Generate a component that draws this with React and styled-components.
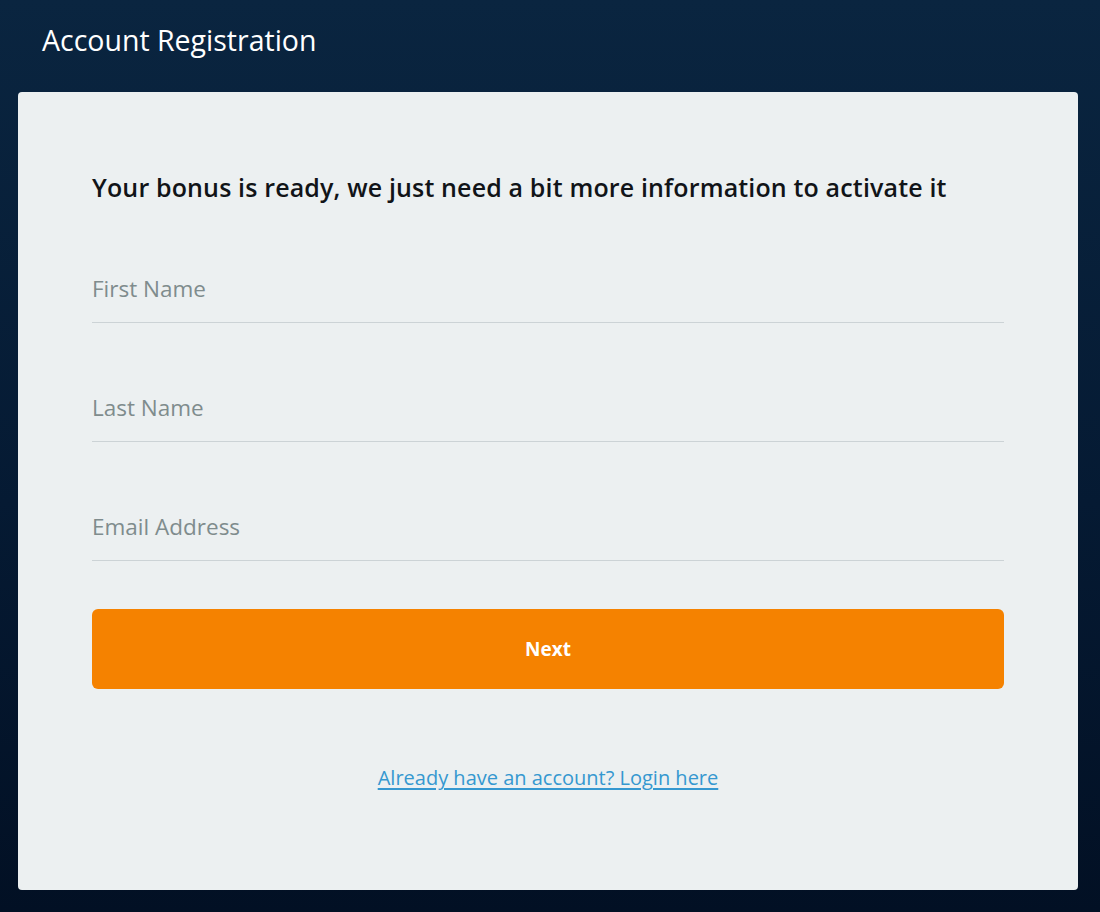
import React from 'react';
import styled, { createGlobalStyle } from 'styled-components';

const GlobalStyle = createGlobalStyle`
  html, body {
    margin: 0;
    padding: 0;
  }
  body {
    min-height: 912px;
    background: linear-gradient(180deg, #0a2540 0%, #051a33 55%, #021024 100%);
    font-family: "Open Sans", "Noto Sans", "Liberation Sans", sans-serif;
  }
  * {
    box-sizing: border-box;
  }
`;

const Page = styled.div`
  display: flex;
  flex-direction: column;
  padding: 0 22px 23px 18px;
`;

const Header = styled.header`
  height: 92px;
  display: flex;
  align-items: center;
  padding: 0 0 13px 24px;
`;

const Title = styled.h1`
  margin: 0;
  font-size: 28.5px;
  font-weight: 400;
  color: #ffffff;
`;

const Card = styled.main`
  background: #ecf0f1;
  border-radius: 4px;
  padding: 79px 74px 98px;
  display: flex;
  flex-direction: column;
`;

const Heading = styled.h2`
  margin: 0;
  font-size: 25px;
  line-height: 32px;
  font-weight: 600;
  color: #111418;
  letter-spacing: 0.15px;
`;

const Form = styled.form`
  display: flex;
  flex-direction: column;
  gap: 68px;
  margin-top: 69px;
`;

const Field = styled.input`
  display: block;
  width: 100%;
  height: 51px;
  padding: 0 0 18px;
  border: none;
  border-bottom: 1px solid #ccd3d6;
  background: transparent;
  font-family: inherit;
  font-size: 22.5px;
  color: #2c3e50;
  outline: none;

  &::placeholder {
    color: #7f8c8d;
  }
`;

const Button = styled.button`
  margin-top: -20px;
  height: 80px;
  border: none;
  border-radius: 6px;
  background: #f58200;
  color: #ffffff;
  font-family: inherit;
  font-size: 19px;
  font-weight: 700;
  cursor: pointer;
`;

const LoginLink = styled.a`
  align-self: center;
  margin-top: 75px;
  font-size: 20px;
  line-height: 28px;
  color: #3598d0;
  text-decoration: underline;
  text-underline-offset: 3px;
`;

export default function App() {
  return (
    <>
      <GlobalStyle />
      <Page>
        <Header>
          <Title>Account Registration</Title>
        </Header>
        <Card>
          <Heading>Your bonus is ready, we just need a bit more information to activate it</Heading>
          <Form onSubmit={(e) => e.preventDefault()}>
            <Field type="text" placeholder="First Name" />
            <Field type="text" placeholder="Last Name" />
            <Field type="email" placeholder="Email Address" />
            <Button type="submit">Next</Button>
          </Form>
          <LoginLink href="#">Already have an account? Login here</LoginLink>
        </Card>
      </Page>
    </>
  );
}
